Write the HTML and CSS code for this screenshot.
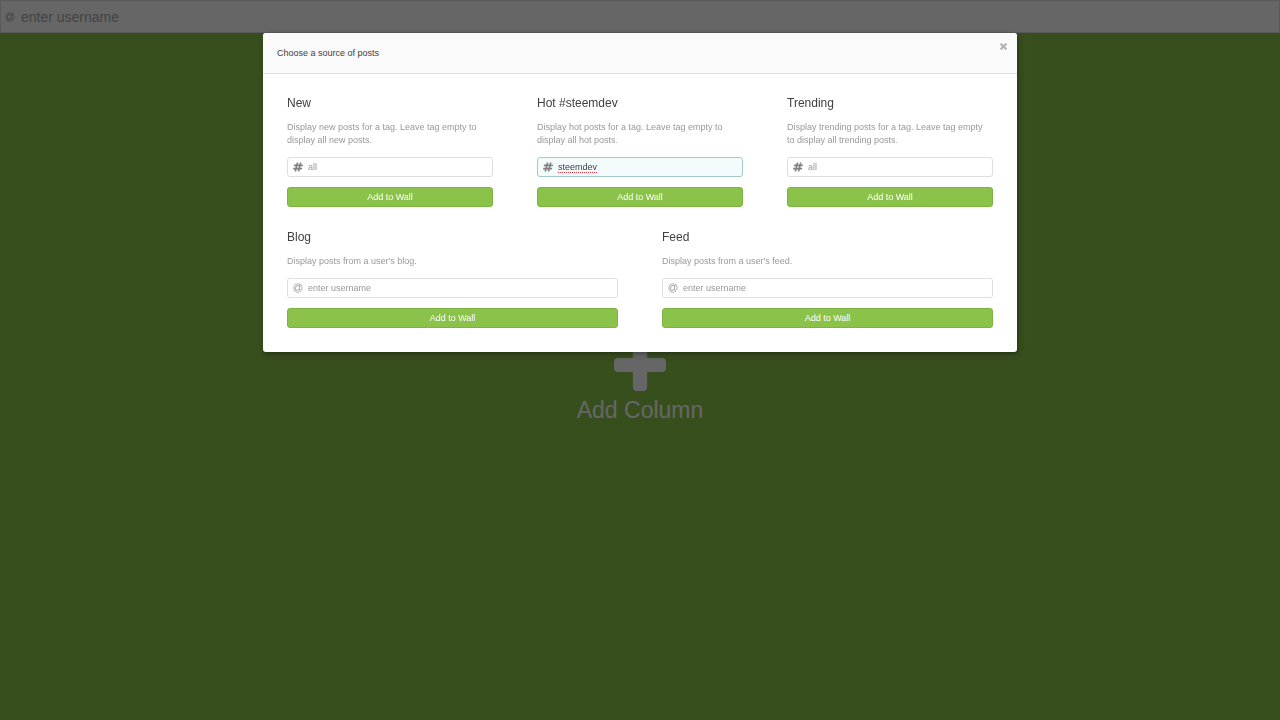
FILE: index.html
```
<!DOCTYPE html>
<html lang="en">
<head>
<meta charset="UTF-8" />
<meta name="viewport" content="width=device-width, initial-scale=1" />
<title>Steem Wall</title>
<link rel="stylesheet" href="styles.css">
</head>
<body>

<!-- shared icons -->
<svg class="sprite" aria-hidden="true">
<symbol id="icon-at" viewBox="-80 48 1696 1696"><path d="M972 775q0-108-53.5-169t-147.5-61q-63 0-124 30.5t-110 84.5-79.5 137-30.5 180q0 112 53.5 173t150.5 61q96 0 176-66.5t122.5-166 42.5-203.5zm564 121q0 111-37 197t-98.5 135-131.5 74.5-145 27.5q-6 .5-15.5.5t-16.5.5q-95 0-142-53-28-33-33-83-52 66-131.5 110t-173.5 44q-161 0-249.5-95.5t-88.5-269.5q0-157 66-290t179-210.5 246-77.5q87 0 155 35.5t106 99.5l2-19 11-56q1-6 5.5-12t9.5-6h118q5 0 13 11 5 5 3 16l-120 614q-5 24-5 48 0 39 12.5 52t44.5 13q28-1 57-5.5t73-24 77-50 57-89.5 24-137q0-292-174-466t-466-174q-130 0-248.5 51t-204 136.5-136.5 204-51 248.5 51 248.5 136.5 204 204 136.5 248.5 51q228 0 405-144 11-9 24-8t21 12l41 49q8 12 7 24-2 13-12 22-102 83-227.5 128t-258.5 45q-156 0-298-61t-245-164-164-245-61-298 61-298 164-245 245-164 298-61q344 0 556 212t212 556z"/></symbol>
<symbol id="icon-hash" viewBox="32 32 1728 1728"><path d="M991 1024l64-256h-254l-64 256h254zm768-504l-56 224q-7 24-31 24h-327l-64 256h311q15 0 25 12 10 14 6 28l-56 224q-5 24-31 24h-327l-81 328q-7 24-31 24h-224q-16 0-26-12-9-12-6-28l78-312h-254l-81 328q-7 24-31 24h-225q-15 0-25-12-9-12-6-28l78-312h-311q-15 0-25-12-9-12-6-28l56-224q7-24 31-24h327l64-256h-311q-15 0-25-12-10-14-6-28l56-224q5-24 31-24h327l81-328q7-24 32-24h224q15 0 25 12 9 12 6 28l-78 312h254l81-328q7-24 32-24h224q15 0 25 12 9 12 6 28l-78 312h311q15 0 25 12 9 12 6 28z"/></symbol>
<symbol id="icon-close" viewBox="302 366 1188 1188"><path d="M1490 1322q0 40-28 68l-136 136q-28 28-68 28t-68-28l-294-294-294 294q-28 28-68 28t-68-28l-136-136q-28-28-28-68t28-68l294-294-294-294q-28-28-28-68t28-68l136-136q28-28 68-28t68 28l294 294 294-294q28-28 68-28t68 28l136 136q28 28 28 68t-28 68l-294 294 294 294q28 28 28 68z"/></symbol>
<symbol id="icon-plus" viewBox="192 128 1408 1408"><path d="M1600 736v192q0 40-28 68t-68 28h-416v416q0 40-28 68t-68 28h-192q-40 0-68-28t-28-68v-416h-416q-40 0-68-28t-28-68v-192q0-40 28-68t68-28h416v-416q0-40 28-68t68-28h192q40 0 68 28t28 68v416h416q40 0 68 28t28 68z"/></symbol>
</svg>

<div class="wall">
<header class="topbar">
<label class="field field-large">
<svg class="icon icon-light"><use href="#icon-at"/></svg>
<input type="text" placeholder="enter username" aria-label="Username" />
</label>
</header>

<main class="columns">
<button class="add-column" type="button">
<svg class="plus"><use href="#icon-plus"/></svg>
Add Column
</button>
</main>
</div>

<div class="dimmer">
<div class="modal" role="dialog" aria-labelledby="modalTitle">

<div class="modal-header">
<h1 id="modalTitle">Choose a source of posts</h1>
<button class="close" type="button" aria-label="Close"><svg class="icon"><use href="#icon-close"/></svg></button>
</div>

<div class="modal-content">
<div class="sources three">
<form class="source">
<h2>New</h2>
<p>Display new posts for a tag. Leave tag empty to display all new posts.</p>
<label class="field">
<svg class="icon"><use href="#icon-hash"/></svg>
<input type="text" placeholder="all" aria-label="New posts tag" />
</label>
<button class="add" type="button">Add to Wall</button>
</form>

<form class="source">
<h2>Hot #steemdev</h2>
<p>Display hot posts for a tag. Leave tag empty to display all hot posts.</p>
<label class="field active">
<svg class="icon"><use href="#icon-hash"/></svg>
<input type="text" value="steemdev" placeholder="all" aria-label="Hot posts tag" />
</label>
<button class="add" type="button">Add to Wall</button>
</form>

<form class="source">
<h2>Trending</h2>
<p>Display trending posts for a tag. Leave tag empty to display all trending posts.</p>
<label class="field">
<svg class="icon"><use href="#icon-hash"/></svg>
<input type="text" placeholder="all" aria-label="Trending posts tag" />
</label>
<button class="add" type="button">Add to Wall</button>
</form>
</div>

<div class="sources two">
<form class="source">
<h2>Blog</h2>
<p>Display posts from a user's blog.</p>
<label class="field">
<svg class="icon icon-light"><use href="#icon-at"/></svg>
<input type="text" placeholder="enter username" aria-label="Blog username" />
</label>
<button class="add" type="button">Add to Wall</button>
</form>

<form class="source">
<h2>Feed</h2>
<p>Display posts from a user's feed.</p>
<label class="field">
<svg class="icon icon-light"><use href="#icon-at"/></svg>
<input type="text" placeholder="enter username" aria-label="Feed username" />
</label>
<button class="add" type="button">Add to Wall</button>
</form>
</div>
</div>

</div>
</div>

</body>
</html>
```
FILE: styles.css
```
* {
  box-sizing: border-box;
}
body {
  margin: 0;
  background: #8bc34a;
  color: #404040;
  font-family: "Liberation Sans", Arial, sans-serif;
  font-size: 9px;
  line-height: 13px;
}
h1, h2, p {
  margin: 0;
  font-weight: normal;
}
button, input {
  font: inherit;
  color: inherit;
}
button {
  border: none;
  padding: 0;
  cursor: pointer;
}
.sprite {
  display: none;
}
.icon {
  flex: none;
  width: 10px;
  height: 10px;
  fill: #808080;
}
.icon-light {
  fill: #a0a0a0;
}

/* Wall */
.wall {
  display: flex;
  flex-direction: column;
  min-height: 100vh;
}
.columns {
  flex: 1;
  display: flex;
}
.add-column {
  flex: 1;
  display: flex;
  flex-direction: column;
  align-items: center;
  justify-content: center;
  gap: 5px;
  padding-top: 10px;
  background: none;
  color: #fff;
  font-size: 23px;
  line-height: 28px;
}
.plus {
  width: 52px;
  height: 52px;
  fill: #fff;
}

/* Inputs */
.field {
  display: flex;
  align-items: center;
  gap: 5px;
  height: 20px;
  padding: 0 5px 0 4px;
  background: #fff;
  border: 1px solid #dedede;
  border-radius: 3px;
}
.source .field {
  padding-left: 5px;
}
.field input {
  flex: 1;
  min-width: 0;
  padding: 0;
  border: none;
  outline: none;
  background: none;
}
.field input::placeholder {
  color: #999;
}
.field.active {
  background: #f4fbfd;
  border-color: #a3c9cc;
}
.field.active input {
  text-decoration: underline dotted #e0383e 1px;
  text-underline-offset: 2px;
}
.field-large {
  gap: 6px;
  height: 33px;
  border-radius: 0;
  font-size: 14px;
}
.field-large input::placeholder {
  color: #a8a8a8;
}

/* Modal */
.dimmer {
  position: fixed;
  top: 0; left: 0; right: 0; bottom: 0;
  display: flex;
  justify-content: center;
  align-items: flex-start;
  padding: 33px 20px;
  overflow: auto;
  background: rgba(0,0,0,0.6);
}
.modal {
  width: 100%;
  max-width: 754px;
  background: #fff;
  border-radius: 3px;
  overflow: hidden;
  box-shadow: 1px 2px 3px rgba(0,0,0,0.2), 1px 2px 10px rgba(0,0,0,0.2);
}
.modal-header {
  display: flex;
  justify-content: space-between;
  padding: 10px 10px 10px 14px;
  background: #fafafa;
  border-bottom: 1px solid #dfe0e0;
}
.modal-header h1 {
  font-size: 9px;
  line-height: 20px;
}
.close {
  align-self: flex-start;
  display: flex;
  background: none;
}
.close .icon {
  width: 7px;
  height: 7px;
  fill: #b4b4b4;
}
.modal-content {
  display: grid;
  gap: 22px;
  padding: 21px 24px 24px;
}
.sources {
  display: grid;
  gap: 22px 44px;
}
.three {
  grid-template-columns: repeat(3, 1fr);
}
.two {
  grid-template-columns: repeat(2, 1fr);
}
.source {
  display: flex;
  flex-direction: column;
}
.source h2 {
  margin-bottom: 10px;
  font-size: 12px;
  line-height: 16px;
}
.source p {
  margin-bottom: 10px;
  padding-right: 2px;
  color: #999;
}
.add {
  height: 20px;
  margin-top: 10px;
  background: #8bc34a;
  border: 1px solid #7cb342;
  border-radius: 3px;
  color: #fff;
}
.add:hover {
  background: #7cb342;
}

/* Narrow screens */
@media (max-width: 600px) {
  .three, .two {
    grid-template-columns: 1fr;
  }
}
```
